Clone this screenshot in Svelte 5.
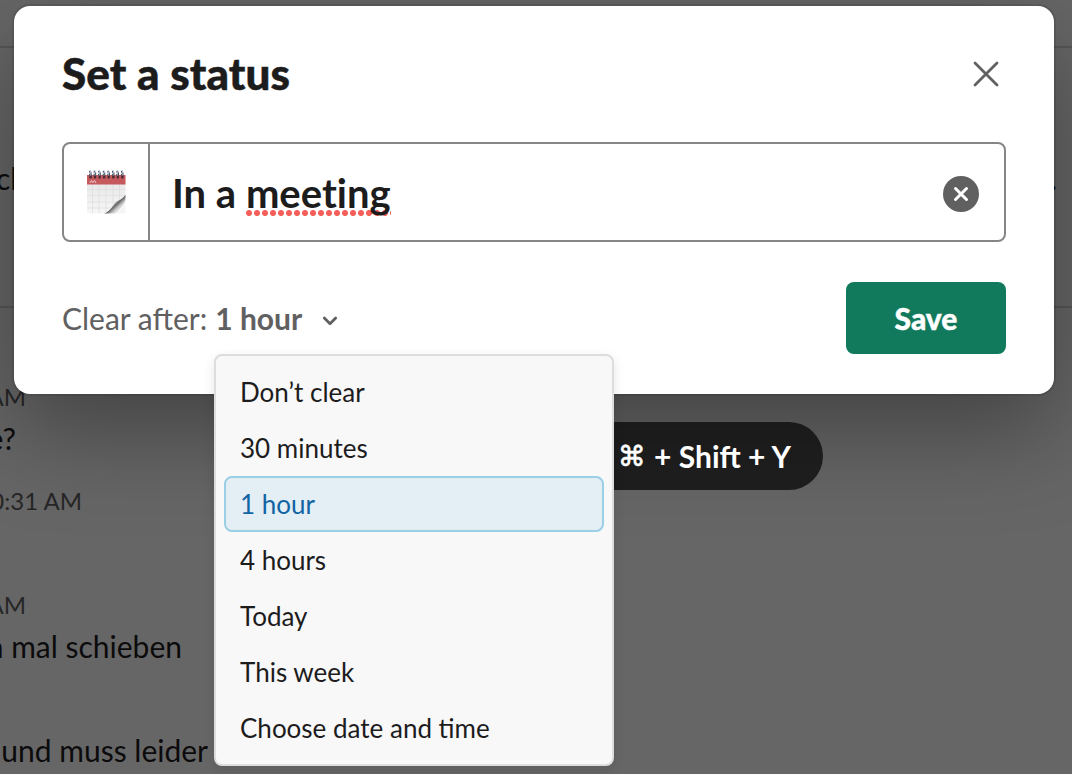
<script>
  const options = ['Don’t clear', '30 minutes', '1 hour', '4 hours', 'Today', 'This week', 'Choose date and time'];
  let selected = $state('1 hour');
  const messages = [
    { time: 'AM', timeEnd: 26, text: 'e?', textEnd: 16 },
    { time: '0:31 AM', timeEnd: 82, text: '', textEnd: 0 },
    { time: 'AM', timeEnd: 26, text: 'n mal schieben', textEnd: 182 },
    { time: '', timeEnd: 0, text: 'und muss leider', textEnd: 208 }
  ];
  const rings = [3.2, 7.7, 12.3, 16.8, 21.4, 26, 30.5, 35];
</script>

<div class="page">
  <div class="channel">
    <div class="topbar"></div>
    <div class="header"><span>cl</span><span>.</span></div>
    <div class="messages">
      {#each messages as m}
        <div class="message">
          <div class="time" style="width: {m.timeEnd}px"><span>{m.time}</span></div>
          <div class="body" style="width: {m.textEnd}px"><span>{m.text}</span></div>
        </div>
      {/each}
    </div>
  </div>

  <main class="dialog">
    <header>
      <h1>Set a status</h1>
      <button class="close" aria-label="Close">
        <svg width="26" height="26" viewBox="0 0 26 26"><path d="M2 2 24 24M24 2 2 24" fill="none" stroke="#616061" stroke-width="2.8" stroke-linecap="round" /></svg>
      </button>
    </header>

    <div class="field">
      <div class="emoji">
        <svg width="40" height="46" viewBox="0 0 40 46">
          <defs>
            <linearGradient id="paper" x1="0" y1="0" x2="0" y2="1"><stop offset="0" stop-color="#e9e9ea" /><stop offset="1" stop-color="#f7f7f7" /></linearGradient>
            <linearGradient id="curl" x1="24" y1="31" x2="34" y2="42" gradientUnits="userSpaceOnUse"><stop offset="0" stop-color="#f0f0f0" /><stop offset=".3" stop-color="#d0d0d0" /><stop offset=".5" stop-color="#666" /><stop offset=".72" stop-color="#c4c4c4" /><stop offset="1" stop-color="#f7f7f7" /></linearGradient>
          </defs>
          <path d="M1 15H39.500V27L22 44.500H1Z" fill="url(#paper)" />
          <path d="M6.5 15V44M13 15V44M20 15V44M27 15V38M33.500 15V32M1 20.500H39.500M1 26.500H39M1 33H33M1 39H27" stroke="#dededf" stroke-width=".8" />
          <path d="M39.500 25.500C37 30 33 31 30 33C27 36 25 42 18 44.500H29C33 42 38 36 39.500 31Z" fill="url(#curl)" />
          <path d="M29 44.500C35 42 38.500 35 39.500 31V44.500Z" fill="#f5f5f5" />
          <rect x="1" y="6" width="38.500" height="9.500" fill="#c4595e" />
          <path d="m3.800 14 1.700-2.600 1.300 2.300 1.700-2.300 1.500 2.600" fill="none" stroke="#efc9ca" stroke-width="1" />
          {#each rings as x}
            <rect x={x} y="1" width="2" height="5.500" rx="1" fill="#c3cbd8" />
            <path d="M{x + 0.5} 2v1.500M{x + 2} 3.500v4.500M{x + 0.4} 5v2" stroke="#454a5c" stroke-width="1" />
            <rect x={x} y="7" width="2.600" height="2.400" rx="1" fill="#4a2b34" />
          {/each}
        </svg>
      </div>
      <div class="value"><span>In a <span class="misspelt">meeting</span></span></div>
      <button class="clear" aria-label="Clear status">
        <svg width="36" height="36" viewBox="0 0 36 36"><circle cx="18" cy="18" r="18" fill="#616061" /><path d="m12.500 12.500 11 11m0-11-11 11" stroke="#fff" stroke-width="3" stroke-linecap="round" /></svg>
      </button>
    </div>

    <footer>
      <div class="after">
        <span class="label">Clear after:</span><strong>{selected}</strong>
        <svg width="16" height="12" viewBox="0 0 16 12"><path d="m2.300 3 5.700 5.700L13.700 3" fill="none" stroke="#616061" stroke-width="2.800" stroke-linecap="round" stroke-linejoin="round" /></svg>
      </div>
      <button class="save">Save</button>
    </footer>
  </main>

  <div class="shortcut"><span class="cmd">⌘</span><span>+ Shift + Y</span></div>

  <div class="menu">
    {#each options as option}
      <button class="option" class:active={option === selected} onclick={() => (selected = option)}>{option}</button>
    {/each}
  </div>
</div>

<style>
  :global(body) { margin: 0; overflow: hidden; background: #666; }
  .page {
    position: relative; box-sizing: border-box; width: 1072px; height: 774px; overflow: hidden;
    padding: 6px 18px 0 14px; background: #666; color: #1d1c1d; font-family: Lato, sans-serif;
  }
  button { border: 0; padding: 0; background: none; font: inherit; color: inherit; cursor: pointer; }
  svg { display: block; }

  .channel { position: absolute; inset: 0; color: #0c0b0c; font-size: 30px; }
  .topbar { height: 46px; border-bottom: 2px solid #575757; }
  .header {
    box-sizing: border-box; height: 260px; padding: 2px 15px 0 0; border-bottom: 2px solid #575757;
    display: flex; align-items: center; justify-content: space-between;
  }
  .header span:first-child { margin-left: -4px; }
  .messages { display: flex; flex-direction: column; gap: 20px; padding-top: 67px; }
  .message { height: 84px; white-space: nowrap; line-height: 42px; }
  .time, .body { display: flex; justify-content: flex-end; height: 42px; }
  .time { color: #272627; font-size: 24px; line-height: 43px; }

  .dialog {
    position: relative; box-sizing: border-box; height: 388px; padding: 36px 48px 40px; border-radius: 16px;
    background: #fff; box-shadow: 0 0 0 2px rgba(29, 28, 29, .13), 0 36px 96px rgba(0, 0, 0, .35);
  }
  header { display: flex; justify-content: space-between; align-items: center; height: 64px; padding-right: 7px; }
  h1 { margin: 0; font-size: 44px; font-weight: 900; line-height: 64px; padding-bottom: 2px; letter-spacing: .1px; -webkit-text-stroke: .5px currentColor; }
  .field {
    box-sizing: border-box; display: flex; align-items: center; height: 100px; margin-top: 36px;
    border: 2px solid #868686; border-radius: 8px; padding-right: 25px;
  }
  .emoji { display: grid; place-items: center; box-sizing: border-box; width: 86px; height: 96px; border-right: 2px solid #868686; }
  .emoji svg { margin-right: 1px; }
  .value { flex: 1; padding: 2px 0 0 22px; font-size: 40px; font-weight: 700; font-variant-ligatures: none; }
  .clear { padding-top: 4px; }
  .misspelt { background: radial-gradient(circle at 4px 3px, #f5605c 2.700px, transparent 3.300px) -1px 41px / 8px 6px repeat-x; }
  footer { display: flex; justify-content: space-between; align-items: center; height: 72px; margin-top: 40px; }
  .after { display: flex; align-items: center; color: #616061; font-size: 30px; }
  .label { margin-right: 8px; }
  .after svg { margin-left: 20px; margin-top: 5px; }
  .save { width: 160px; height: 72px; border-radius: 8px; background: #127a5c; color: #fff; font-size: 30px; font-weight: 900; -webkit-text-stroke: .4px currentColor; }

  .shortcut {
    position: absolute; left: 430px; top: 422px; box-sizing: border-box; width: 393px; height: 68px; padding-right: 32px;
    display: flex; align-items: center; justify-content: flex-end; gap: 8px; border-radius: 34px;
    background: rgba(13, 13, 13, .8); color: #fff; font-size: 30px; font-weight: 700; white-space: nowrap;
  }
  .cmd { padding-top: 1px; font-family: "DejaVu Sans", sans-serif; font-weight: 400; font-size: 28px; -webkit-text-stroke: .6px currentColor; }

  .menu {
    position: absolute; left: 214px; top: 354px; box-sizing: border-box; width: 400px; height: 412px; padding: 8px;
    border: 2px solid #dddddd; border-radius: 8px; background: #f8f8f8; box-shadow: 0 4px 12px rgba(0, 0, 0, .1);
  }
  .option {
    display: block; box-sizing: border-box; width: 100%; height: 56px; padding: 0 14px; border: 2px solid transparent;
    border-radius: 8px; text-align: left; font-size: 26px;
  }
  .option.active { background: #e3eff5; border-color: #9bcfe5; color: #1264a3; }
</style>
